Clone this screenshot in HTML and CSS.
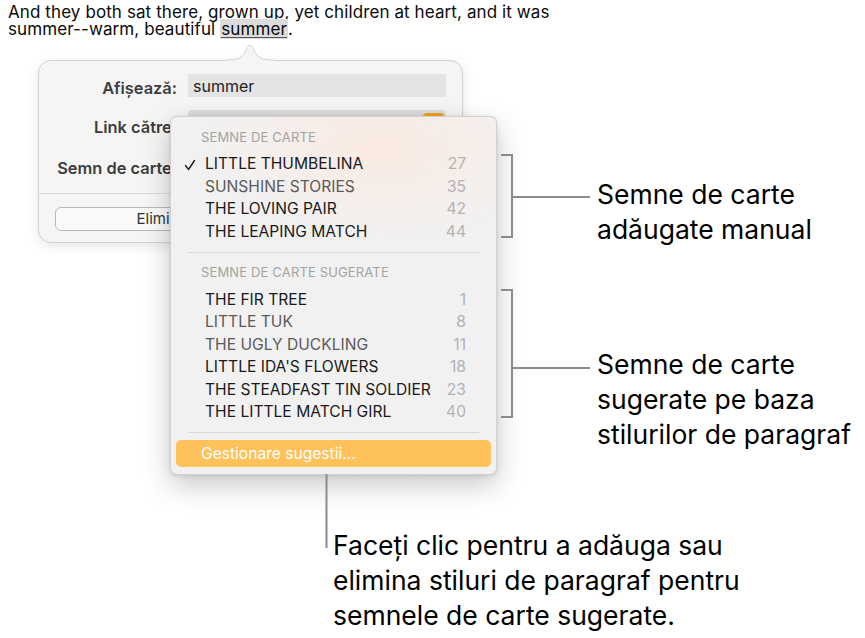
FILE: index.html
```html
<!DOCTYPE html>
<html lang="ro">
<head>
<meta charset="utf-8">
<title>Semne de carte</title>
<link rel="stylesheet" href="styles.css">
</head>
<body>
<div class="canvas">
  <p class="doc">And they both sat there, grown up, yet children at heart, and it was<br>summer--warm, beautiful <span class="sel">summer</span>.</p>

  <div class="popover">
    <svg class="tail" width="48" height="21" viewBox="0 0 48 21">
      <path d="M0 18 C10 18 14 17 18 12 L21.5 5.5 Q24 1.5 26.5 5.5 L30 12 C34 17 38 18 48 18 L48 21 L0 21 Z" fill="#f5f5f5"/>
      <path d="M0 18 C10 18 14 17 18 12 L21.5 5.5 Q24 1.5 26.5 5.5 L30 12 C34 17 38 18 48 18" fill="none" stroke="#d2d2d2" stroke-width="1"/>
    </svg>
    <div class="form">
      <span class="lbl">Afișează:</span>
      <div class="field">summer</div>
      <span class="lbl">Link către:</span>
      <div class="popup"><span class="popup-btn"></span></div>
      <span class="lbl">Semn de carte:</span>
      <div></div>
    </div>
    <div class="psep"></div>
    <div class="pbtn">Eliminați</div>
  </div>

  <div class="menu">
    <div class="mhead">SEMNE DE CARTE</div>
    <div class="mitem"><span class="chk"><svg width="12" height="12" viewBox="0 0 12 12"><path d="M1.5 6.5 L4.5 10.5 L10.5 1.5" fill="none" stroke="#1c1c1c" stroke-width="1.4" stroke-linecap="round" stroke-linejoin="round"/></svg></span><span class="t">LITTLE THUMBELINA</span><span class="n">27</span></div>
    <div class="mitem dim"><span class="chk"></span><span class="t">SUNSHINE STORIES</span><span class="n">35</span></div>
    <div class="mitem"><span class="chk"></span><span class="t">THE LOVING PAIR</span><span class="n">42</span></div>
    <div class="mitem"><span class="chk"></span><span class="t">THE LEAPING MATCH</span><span class="n">44</span></div>
    <div class="msep"></div>
    <div class="mhead second">SEMNE DE CARTE SUGERATE</div>
    <div class="mitem"><span class="chk"></span><span class="t">THE FIR TREE</span><span class="n">1</span></div>
    <div class="mitem dim"><span class="chk"></span><span class="t">LITTLE TUK</span><span class="n">8</span></div>
    <div class="mitem dim"><span class="chk"></span><span class="t">THE UGLY DUCKLING</span><span class="n">11</span></div>
    <div class="mitem"><span class="chk"></span><span class="t">LITTLE IDA'S FLOWERS</span><span class="n">18</span></div>
    <div class="mitem"><span class="chk"></span><span class="t">THE STEADFAST TIN SOLDIER</span><span class="n">23</span></div>
    <div class="mitem"><span class="chk"></span><span class="t">THE LITTLE MATCH GIRL</span><span class="n">40</span></div>
    <div class="msep"></div>
    <div class="mhi">Gestionare sugestii...</div>
  </div>

  <div class="callout c1">
    <svg width="92" height="84" viewBox="0 0 92 84"><path d="M1 1 H12 V83 H1 M12 43 H90" fill="none" stroke="#8c8c8c" stroke-width="2"/></svg>
    <div class="ctext">Semne de carte<br>adăugate manual</div>
  </div>

  <div class="callout c2">
    <svg width="92" height="130" viewBox="0 0 92 130"><path d="M1 1 H12 V128 H1 M12 79 H90" fill="none" stroke="#8c8c8c" stroke-width="2"/></svg>
    <div class="ctext">Semne de carte<br>sugerate pe baza<br>stilurilor de paragraf</div>
  </div>

  <div class="callout c3">
    <svg width="3" height="74" viewBox="0 0 3 74"><path d="M1.5 0 V74" fill="none" stroke="#8c8c8c" stroke-width="2"/></svg>
    <div class="ctext">Faceți clic pentru a adăuga sau<br>elimina stiluri de paragraf pentru<br>semnele de carte sugerate.</div>
  </div>
</div>
</body>
</html>
```

FILE: styles.css
```css
* { box-sizing: border-box; }
html, body { margin: 0; padding: 0; background: #ffffff; }
body { font-family: Inter, "Liberation Sans", Arial, sans-serif; color: #000; }

.canvas {
  position: relative;
  width: 865px;
  height: 638px;
  overflow: hidden;
  background: #fff;
}

.doc {
  margin: 0;
  padding: 4px 0 0 8px;
  font-size: 17px;
  line-height: 17px;
  letter-spacing: 0.1px;
  color: #0a0a0a;
}
.sel {
  background: #dcdcdc;
  text-decoration: underline;
  text-decoration-color: #555;
  text-underline-offset: 2px;
  padding: 0 1px;
}

/* popover */
.popover {
  position: absolute;
  left: 38px;
  top: 60px;
  width: 425px;
  height: 183px;
  background: #f5f5f5;
  border: 1px solid #d2d2d2;
  border-radius: 13px;
  box-shadow: 0 3px 12px rgba(0,0,0,0.10);
  padding-top: 13px;
}
.tail {
  position: absolute;
  left: 187px;
  top: -19px;
  display: block;
}
.form {
  display: grid;
  grid-template-columns: 138px 258px;
  grid-template-rows: 23px 34px 22px;
  column-gap: 11px;
  row-gap: 13px;
}
.lbl {
  justify-self: end;
  align-self: center;
  font-size: 16.4px;
  font-weight: 600;
  color: #3d3d3d;
  white-space: nowrap;
}
.form > .lbl:first-child { padding-top: 4px; }
.field {
  background: #e4e4e4;
  font-size: 16px;
  line-height: 24px;
  padding-left: 5px;
  color: #222;
}
.popup {
  height: 23px;
  background: #dcdcdc;
  border-radius: 4px;
  display: flex;
  justify-content: flex-end;
  padding: 3px 2px 0 0;
}
.popup-btn {
  width: 21px;
  height: 18px;
  background: #f1a31d;
  border-radius: 4px;
}
.psep {
  height: 1px;
  background: #dadada;
  margin-top: 14px;
}
.pbtn {
  margin: 13px 0 0 16px;
  width: 222px;
  height: 24px;
  border: 1px solid #b9b9b9;
  border-radius: 6px;
  background: #f9f9f9;
  font-size: 15px;
  line-height: 22px;
  text-align: center;
  color: #333;
}

/* dropdown menu */
.menu {
  position: absolute;
  left: 170px;
  top: 116px;
  width: 327px;
  height: 359px;
  border-radius: 7px;
  border: 1px solid rgba(0,0,0,0.13);
  background:
    radial-gradient(ellipse 170px 90px at 210px 30px, rgba(252,232,220,0.75), rgba(252,232,220,0) 100%),
    #f2f1f1;
  box-shadow: 0 10px 28px rgba(0,0,0,0.22), 0 1px 4px rgba(0,0,0,0.10);
  padding: 11.6px 0 7px;
  display: flex;
  flex-direction: column;
}
.mhead {
  height: 16px;
  line-height: 16px;
  font-size: 13px;
  font-weight: 400;
  color: #a3a3a3;
  padding-left: 30px;
  margin-bottom: 8.7px;
  letter-spacing: 0.15px;
}
.mhead.second { margin-top: 4.8px; }
.mitem {
  height: 22.5px;
  line-height: 22.5px;
  display: grid;
  grid-template-columns: 34px 1fr auto;
  padding-right: 30px;
  font-size: 15.6px;
  color: #1a1a1a;
}
.mitem.dim { color: #5a5a5a; }
.chk {
  display: flex;
  align-items: center;
  padding-left: 13px;
}
.chk svg { display: block; }
.n { color: #b3b3b3; text-align: right; }
.msep {
  height: 1px;
  background: #d8d8d8;
  margin: 8.5px 17px 7px;
}
.mhi {
  margin: 0 5px;
  height: 27px;
  line-height: 27px;
  border-radius: 5px;
  background: #ffc159;
  color: #fff;
  font-size: 15.6px;
  padding-left: 25px;
}

/* callouts */
.callout {
  position: absolute;
  display: flex;
  align-items: flex-start;
}
.callout svg { display: block; flex: none; }
.ctext {
  font-size: 26.5px;
  line-height: 35px;
  color: #000;
  white-space: nowrap;
  margin-left: 5px;
}
.c1 { left: 500px; top: 154px; }
.c1 .ctext { margin-top: 23px; }
.c2 { left: 500px; top: 289px; }
.c2 .ctext { margin-top: 58px; }
.c3 { left: 325px; top: 474px; }
.c3 .ctext { margin-top: 54px; margin-left: 5px; }
```
